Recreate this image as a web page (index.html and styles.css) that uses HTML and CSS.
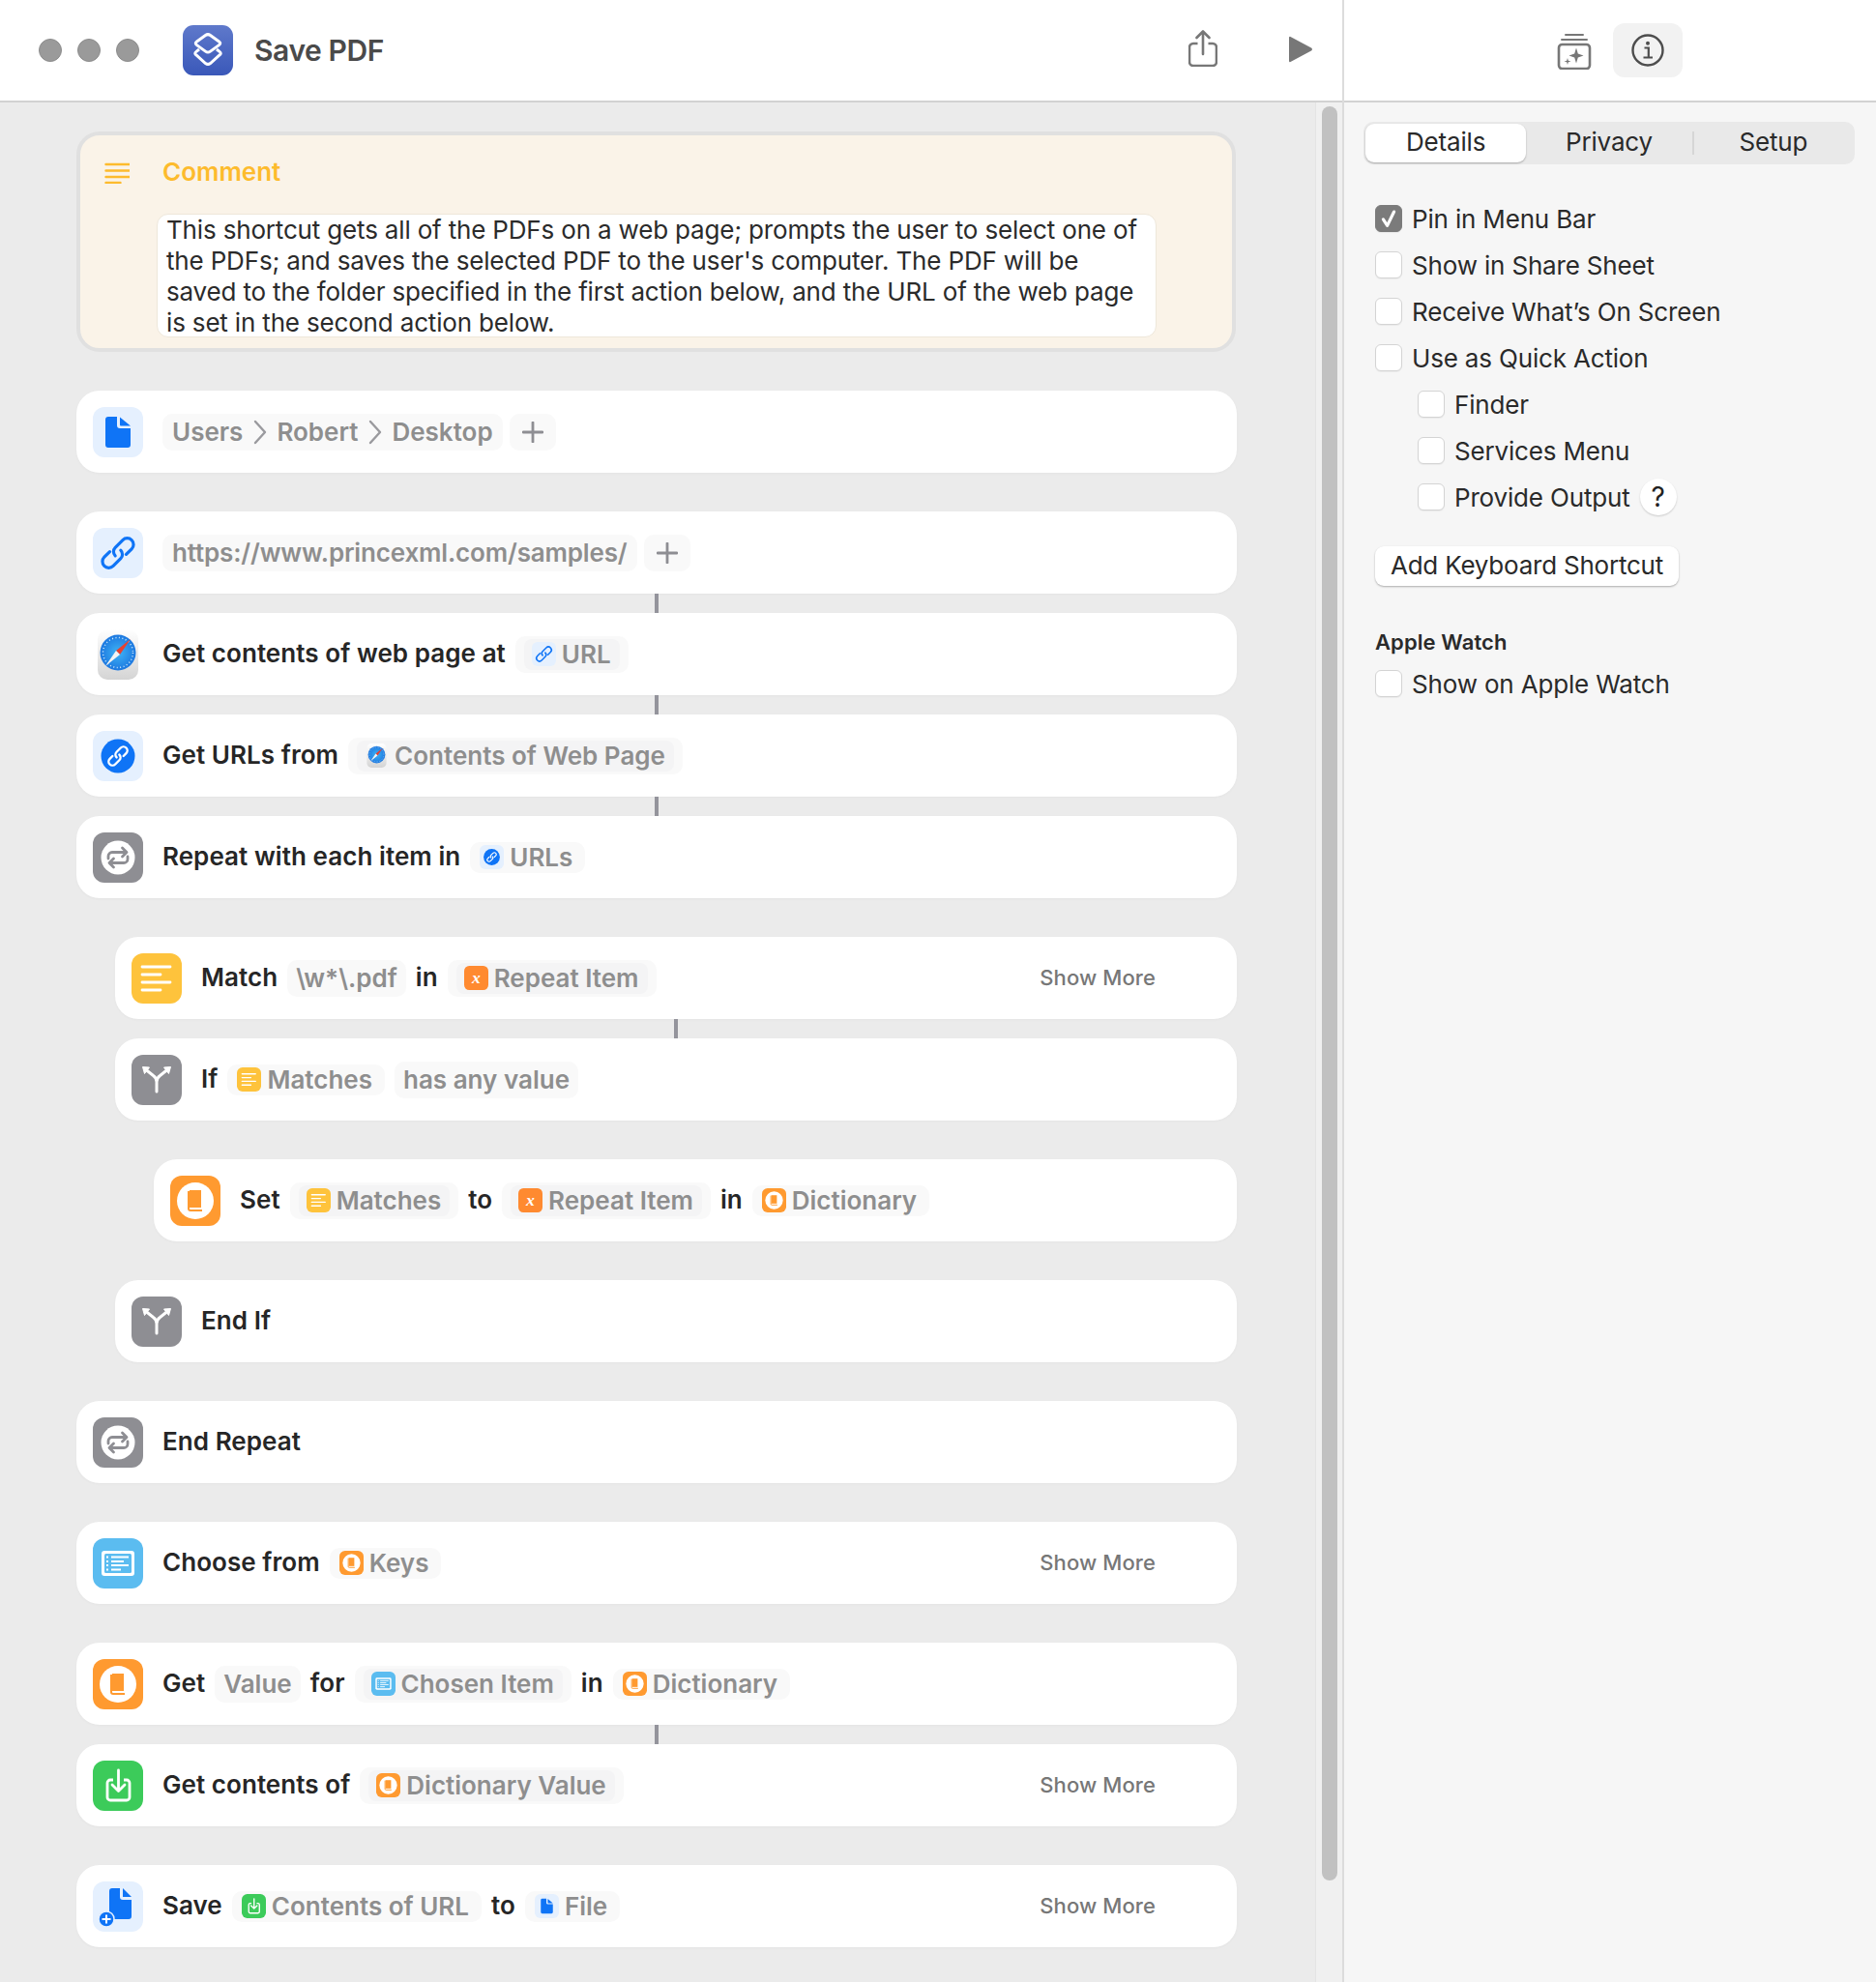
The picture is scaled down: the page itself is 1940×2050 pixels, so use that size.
FILE: index.html
```html
<!DOCTYPE html>
<html lang="en">
<head>
<meta charset="utf-8">
<title>Save PDF</title>
<link rel="stylesheet" href="styles.css">
</head>
<body>
<svg class="sprites" aria-hidden="true">
  <defs>
    <symbol id="doc" viewBox="0 0 52 52"><rect width="52" height="52" rx="12" fill="#e5f0fe"/><path d="M16 10h9v9a3 3 0 0 0 3 3h11v17a3 3 0 0 1-3 3H16a3 3 0 0 1-3-3V13a3 3 0 0 1 3-3z" fill="#0f74f6"/><path d="M28 10.500 39 19.500H29a1 1 0 0 1-1-1z" fill="#0f74f6"/></symbol>
    <symbol id="docplus" viewBox="0 0 52 52"><rect width="52" height="52" rx="12" fill="#e5f0fe"/><path d="M20 7h8v9a3 3 0 0 0 3 3h9v17a3 3 0 0 1-3 3H20a3 3 0 0 1-3-3V10a3 3 0 0 1 3-3z" fill="#0f74f6"/><path d="M31 7l9 9h-9z" fill="#0f74f6"/><circle cx="14" cy="39" r="8" fill="#0f74f6" stroke="#e5f0fe" stroke-width="1.500"/><path d="M14 34.500v9M9.500 39h9" stroke="#fff" stroke-width="2"/></symbol>
    <symbol id="link" viewBox="0 0 52 52"><rect width="52" height="52" rx="12" fill="#e5f0fe"/><g transform="rotate(-45 26 26)" fill="none" stroke="#0f74f6" stroke-width="3.200" stroke-linecap="round"><path d="M30 26a6 6 0 0 1-6 6H13a6.500 6.500 0 0 1 0-13h8"/><path d="M22 26a6 6 0 0 1 6-6h11a6.500 6.500 0 0 1 0 13h-8"/></g></symbol>
    <symbol id="linkc" viewBox="0 0 52 52"><rect width="52" height="52" rx="12" fill="#e5f0fe"/><circle cx="26" cy="26" r="17.500" fill="#0f74f6"/><g transform="rotate(-45 26 26)" fill="none" stroke="#fff" stroke-width="2.400" stroke-linecap="round"><path d="M28 26a4 4 0 0 1-4 4H18a4 4 0 0 1 0-8h4"/><path d="M24 26a4 4 0 0 1 4-4h6a4 4 0 0 1 0 8h-4"/></g></symbol>
    <symbol id="safari" viewBox="0 0 52 52"><defs><linearGradient id="sfbg" x1="0" y1="0" x2="0" y2="1"><stop offset="0" stop-color="#fff"/><stop offset="1" stop-color="#d4d4d4"/></linearGradient><radialGradient id="sfb"><stop offset="0" stop-color="#3fb4f5"/><stop offset="1" stop-color="#1d78e0"/></radialGradient></defs><rect x="5" y="0" width="42" height="52" rx="10" fill="url(#sfbg)"/><circle cx="26" cy="24" r="18.500" fill="url(#sfb)"/><circle cx="26" cy="24" r="15.500" fill="none" stroke="#cfe8fb" stroke-width="1.500" stroke-dasharray="1 2.500"/><path d="M39 10 28 26 24 22z" fill="#e8402f"/><path d="M13 38 24 22 28 26z" fill="#f4f4f4"/></symbol>
    <symbol id="repeat" viewBox="0 0 52 52"><rect width="52" height="52" rx="12" fill="#8e8e93"/><circle cx="26" cy="26" r="17.500" fill="#fff"/><path d="M16 27v-2.500a4 4 0 0 1 4-4h14M30.500 16l4.500 4.500-4.500 4.500M36 25v2.500a4 4 0 0 1-4 4H18M21.500 27 17 31.500l4.500 4.500" fill="none" stroke="#8e8e93" stroke-width="2.800" stroke-linecap="round" stroke-linejoin="round"/></symbol>
    <symbol id="lines" viewBox="0 0 52 52"><rect width="52" height="52" rx="12" fill="#fec33c"/><path d="M11 14h29M11 22h19M11 30h29M11 38h19" stroke="#fff" stroke-width="2.800" stroke-linecap="round"/></symbol>
    <symbol id="fork" viewBox="0 0 52 52"><rect width="52" height="52" rx="12" fill="#8e8e93"/><path d="M26 38V28Q26 24 22.500 21.500L15 15.500M26 28Q26 24 29.500 21.500L37 15.500" fill="none" stroke="#fff" stroke-width="3" stroke-linecap="round"/><path d="M11.500 12.500l7 .500-5 6.500zM40.500 12.500l-7 .500 5 6.500z" fill="#fff" stroke="#fff" stroke-linejoin="round"/></symbol>
    <symbol id="book" viewBox="0 0 52 52"><rect width="52" height="52" rx="12" fill="#ff9a30"/><circle cx="26" cy="26" r="19" fill="#fff"/><path d="M20 15h12v18H20z" fill="#ff9a30"/><path d="M19 16v18a2 2 0 0 0 2 2h12" fill="none" stroke="#ff9a30" stroke-width="2"/></symbol>
    <symbol id="list" viewBox="0 0 52 52"><rect width="52" height="52" rx="12" fill="#5bbcf0"/><rect x="9" y="13" width="34" height="26" rx="3" fill="#fff"/><rect x="12" y="16" width="28" height="20" rx="1.500" fill="#5bbcf0"/><path d="M19 19.500h18M19 24h13M19 28h18M19 32.500h10M14 19.500h2M14 24h2M14 28h2M14 32.500h2" stroke="#fff" stroke-width="1.800"/></symbol>
    <symbol id="down" viewBox="0 0 52 52"><rect width="52" height="52" rx="12" fill="#3ccb5a"/><path d="M21 20h-3a3 3 0 0 0-3 3v15a3 3 0 0 0 3 3h17a3 3 0 0 0 3-3V23a3 3 0 0 0-3-3h-3" fill="none" stroke="#fff" stroke-width="2.800"/><path d="M26.500 10v20M20 25l6.500 6.500L33 25" fill="none" stroke="#fff" stroke-width="2.800" stroke-linecap="round" stroke-linejoin="round"/></symbol>
    <symbol id="chev" viewBox="0 0 14 26"><path d="M2 2l10 11L2 24" fill="none" stroke="#9a9a9e" stroke-width="2.400" stroke-linecap="round" stroke-linejoin="round"/></symbol>
    <symbol id="plus" viewBox="0 0 22 22"><path d="M11 1v20M1 11h20" stroke="#8e8e93" stroke-width="2.800" stroke-linecap="round"/></symbol>
  </defs>
</svg>

<div class="app">
  <section class="main">
    <header class="bar bar-main">
      <div class="lights"><i></i><i></i><i></i></div>
      <svg class="app-icon" viewBox="0 0 52 52"><defs><linearGradient id="appg" x1="0" y1="0" x2="0" y2="1"><stop offset="0" stop-color="#5f79cb"/><stop offset="1" stop-color="#3a58b9"/></linearGradient></defs><rect width="52" height="52" rx="11" fill="url(#appg)"/><path d="M23.500 10.500q2.500-1.800 5 0l9 6.500q2.500 1.800 0 3.600l-9 6.500q-2.500 1.800-5 0l-9-6.500q-2.500-1.800 0-3.600z" fill="none" stroke="#fff" stroke-width="3"/><path d="M17 25l-3 2.400q-2.500 1.800 0 3.600l9.500 8.500q2.500 1.800 5 0l9.500-8.500q2.500-1.800 0-3.600L35 25" fill="none" stroke="#fff" stroke-width="3"/></svg>
      <h1 class="title">Save PDF</h1>
      <svg class="share" viewBox="0 0 30 38"><path d="M9.500 14H5a4 4 0 0 0-4 4v15a4 4 0 0 0 4 4h20a4 4 0 0 0 4-4V18a4 4 0 0 0-4-4h-4.500" fill="none" stroke="#777" stroke-width="2.600"/><path d="M15 25V2M8.500 8 15 1.500 21.500 8" fill="none" stroke="#777" stroke-width="2.600" stroke-linecap="round" stroke-linejoin="round"/></svg>
      <svg class="play" viewBox="0 0 24 28"><path d="M1.500 1 23 12.500a1.700 1.700 0 0 1 0 3L1.500 27a1 1 0 0 1-1.500-1V2a1 1 0 0 1 1.500-1z" fill="#777"/></svg>
    </header>
    <div class="scroller">
      <div class="flow">
        <article class="comment">
          <svg class="comment-icon" viewBox="0 0 25 22"><path d="M1 2h24M1 8.500h24M1 15h24M1 21h15" stroke="#fdbb2d" stroke-width="2.400" stroke-linecap="round"/></svg>
          <div class="comment-body">
            <div class="comment-title">Comment</div>
            <p class="comment-text">This shortcut gets all of the PDFs on a web page; prompts the user to select one of the PDFs; and saves the selected PDF to the user's computer. The PDF will be saved to the folder specified in the first action below, and the URL of the web page is set in the second action below.</p>
          </div>
        </article>

        <div class="card gap"><svg class="tile"><use href="#doc"/></svg>
          <span class="chip path">Users<svg class="chev"><use href="#chev"/></svg>Robert<svg class="chev"><use href="#chev"/></svg>Desktop</span>
          <span class="chip add"><svg class="plus"><use href="#plus"/></svg></span></div>

        <div class="card gap"><svg class="tile"><use href="#link"/></svg>
          <span class="chip url">https://www.princexml.com/samples/</span>
          <span class="chip add"><svg class="plus"><use href="#plus"/></svg></span></div>
        <div class="conn"></div>
        <div class="card"><svg class="tile"><use href="#safari"/></svg><b>Get contents of web page at</b>
          <span class="chip"><span class="var"><svg class="mini"><use href="#link"/></svg>URL</span></span></div>
        <div class="conn"></div>
        <div class="card"><svg class="tile"><use href="#linkc"/></svg><b>Get URLs from</b>
          <span class="chip"><span class="var"><svg class="mini"><use href="#safari"/></svg>Contents of Web Page</span></span></div>
        <div class="conn"></div>
        <div class="card"><svg class="tile"><use href="#repeat"/></svg><b>Repeat with each item in</b>
          <span class="chip solo"><svg class="mini"><use href="#linkc"/></svg>URLs</span></div>

        <div class="card gap in1"><svg class="tile"><use href="#lines"/></svg><b>Match</b>
          <span class="chip">\w*\.pdf</span><b>in</b>
          <span class="chip"><span class="var"><svg class="mini" viewBox="0 0 24 24"><rect width="24" height="24" rx="5" fill="#ff8a30"/><text x="12" y="17" class="x-var">x</text></svg>Repeat Item</span></span>
          <span class="more">Show More</span></div>
        <div class="conn in1"></div>
        <div class="card in1"><svg class="tile"><use href="#fork"/></svg><b>If</b>
          <span class="chip solo"><svg class="mini"><use href="#lines"/></svg>Matches</span>
          <span class="chip">has any value</span></div>

        <div class="card gap in2"><svg class="tile"><use href="#book"/></svg><b>Set</b>
          <span class="chip"><span class="var"><svg class="mini"><use href="#lines"/></svg>Matches</span></span><b>to</b>
          <span class="chip"><span class="var"><svg class="mini" viewBox="0 0 24 24"><rect width="24" height="24" rx="5" fill="#ff8a30"/><text x="12" y="17" class="x-var">x</text></svg>Repeat Item</span></span><b>in</b>
          <span class="chip solo"><svg class="mini"><use href="#book"/></svg>Dictionary</span></div>

        <div class="card gap in1"><svg class="tile"><use href="#fork"/></svg><b>End If</b></div>

        <div class="card gap"><svg class="tile"><use href="#repeat"/></svg><b>End Repeat</b></div>

        <div class="card gap"><svg class="tile"><use href="#list"/></svg><b>Choose from</b>
          <span class="chip solo"><svg class="mini"><use href="#book"/></svg>Keys</span>
          <span class="more">Show More</span></div>

        <div class="card gap"><svg class="tile"><use href="#book"/></svg><b>Get</b>
          <span class="chip">Value</span><b>for</b>
          <span class="chip"><span class="var"><svg class="mini"><use href="#list"/></svg>Chosen Item</span></span><b>in</b>
          <span class="chip solo"><svg class="mini"><use href="#book"/></svg>Dictionary</span></div>
        <div class="conn"></div>
        <div class="card"><svg class="tile"><use href="#down"/></svg><b>Get contents of</b>
          <span class="chip"><span class="var"><svg class="mini"><use href="#book"/></svg>Dictionary Value</span></span>
          <span class="more">Show More</span></div>

        <div class="card gap"><svg class="tile"><use href="#docplus"/></svg><b>Save</b>
          <span class="chip solo"><svg class="mini"><use href="#down"/></svg>Contents of URL</span><b>to</b>
          <span class="chip solo"><svg class="mini"><use href="#doc"/></svg>File</span>
          <span class="more">Show More</span></div>
      </div>
      <div class="track"><div class="thumb"></div></div>
    </div>
  </section>

  <aside class="side">
    <header class="bar bar-side">
      <svg class="lib" viewBox="0 0 36 38"><path d="M9 2h18M5 7h26" stroke="#777" stroke-width="2" stroke-linecap="round"/><rect x="2" y="12" width="32" height="25" rx="3.500" fill="none" stroke="#777" stroke-width="2.600"/><path d="M20 15.500l1.800 6 5.700 2-5.700 2-1.800 6-1.800-6-5.700-2 5.700-2zM11 26l.800 2.700 2.700.800-2.700.800-.800 2.700-.800-2.700-2.700-.800 2.700-.800z" fill="#777"/></svg>
      <span class="info-btn"><svg class="info" viewBox="0 0 34 34"><circle cx="17" cy="17" r="15.500" fill="none" stroke="#4d4d4d" stroke-width="2.400"/><circle cx="17" cy="9.800" r="2" fill="#4d4d4d"/><path d="M13.500 14.500h4.300v10M12.500 24.500h9.500" fill="none" stroke="#4d4d4d" stroke-width="2.200"/></svg></span>
    </header>
    <div class="panel">
      <div class="seg">
        <span class="seg-item on">Details</span>
        <span class="seg-item">Privacy</span>
        <span class="seg-sep"></span>
        <span class="seg-item last">Setup</span>
      </div>
      <ul class="opts">
        <li><span class="cb checked"><svg viewBox="0 0 28 28"><path d="M8 15l4.500 7L20 6.500" fill="none" stroke="#fff" stroke-width="3.400" stroke-linecap="round" stroke-linejoin="round"/></svg></span>Pin in Menu Bar</li>
        <li><span class="cb"></span>Show in Share Sheet</li>
        <li><span class="cb"></span>Receive What’s On Screen</li>
        <li><span class="cb"></span>Use as Quick Action</li>
        <li class="sub"><span class="cb"></span>Finder</li>
        <li class="sub"><span class="cb"></span>Services Menu</li>
        <li class="sub"><span class="cb"></span>Provide Output<span class="help">?</span></li>
      </ul>
      <button class="kbd" type="button">Add Keyboard Shortcut</button>
      <h2 class="watch">Apple Watch</h2>
      <ul class="opts tight"><li><span class="cb"></span>Show on Apple Watch</li></ul>
    </div>
  </aside>
</div>
</body>
</html>
```
FILE: styles.css
```css
* { box-sizing: border-box; }
html, body { margin: 0; padding: 0; }
body {
  width: 1940px;
  height: 2050px;
  overflow: hidden;
  font-family: Inter, "Liberation Sans", sans-serif;
  font-size: 26px;
  color: #262626;
  background: #fff;
}
.sprites { position: absolute; width: 0; height: 0; }
.app { display: flex; height: 2050px; }

/* main column */
.main { width: 1388px; display: flex; flex-direction: column; }
.bar { height: 106px; flex: none; display: flex; align-items: center; background: #fff; border-bottom: 2px solid #d2d2d2; }
.bar-main { padding-left: 40px; }
.lights { display: flex; gap: 16px; }
.lights i { width: 24px; height: 24px; border-radius: 50%; background: #9a9a9a; border: 1px solid #8c8c8c; }
.app-icon { width: 52px; height: 52px; margin-left: 45px; }
.title { margin: 0 0 0 22px; font-size: 30px; font-weight: 600; color: #4a4a4a; letter-spacing: -.4px; }
.share { width: 30px; height: 38px; margin-left: auto; margin-bottom: 4px; }
.play { width: 24px; height: 28px; margin: 0 31px 2px 74px; }

.scroller { flex: 1; display: flex; background: #ebebeb; min-height: 0; }
.flow { width: 1360px; padding: 30px 0 0 79px; display: flex; flex-direction: column; }
.track { width: 28px; padding: 4px 6px 0; background: #f0f0f0; border-left: 1px solid #e4e4e4; }
.thumb { width: 16px; height: 1835px; border-radius: 8px; background: #c1c1c1; }

/* comment */
.comment {
  width: 1199px;
  height: 228px;
  display: flex;
  background: #faf3e8;
  border: 4px solid #e0e0e0;
  border-radius: 24px;
  padding: 25px 0 0 25px;
}
.comment-icon { width: 26px; height: 22px; margin-top: 3px; flex: none; }
.comment-body { margin-left: 28px; }
.comment-title { font-size: 26px; font-weight: 600; color: #fdbb2d; line-height: 26px; margin-left: 6px; }
.comment-text {
  width: 1034px;
  height: 128px;
  margin: 30px 0 0;
  padding: 0 9px;
  background: #fff;
  border: 1px solid #eee7da;
  border-radius: 12px;
  font-size: 26px;
  line-height: 32px;
  letter-spacing: -.17px;
  color: #2b2b2b;
}

/* cards */
.card {
  width: 1200px;
  height: 85px;
  flex: none;
  display: flex;
  align-items: center;
  gap: 10px;
  padding: 0 84px 0 17px;
  background: #fff;
  border-radius: 24px;
  box-shadow: 0 1px 3px rgba(0, 0, 0, .03);
}
.card.gap { margin-top: 40px; }
.card.in1 { width: 1160px; margin-left: 40px; }
.card.in2 { width: 1120px; margin-left: 80px; }
.card b { font-weight: 600; white-space: nowrap; color: #262626; letter-spacing: .06px; margin-bottom: 2px; }
.tile { width: 52px; height: 52px; flex: none; margin-right: 10px; }
.conn { width: 4px; height: 20px; flex: none; background: #94949c; margin-left: 598px; }
.conn.in1 { margin-left: 618px; }

.chip {
  height: 38px;
  display: inline-flex;
  align-items: center;
  padding: 0 9px;
  background: #f9f9f9;
  border-radius: 10px;
  color: #8e8e8e;
  font-weight: 600;
  white-space: nowrap;
}
.chip.path { padding: 0 10px; }
.chip.url { padding: 0 10px; letter-spacing: -.16px; }
.chip.solo { height: 32px; gap: 6px; padding: 0 13px 0 10px; }
.chip.add { padding: 0 13px; margin-left: -3px; }
.var { height: 32px; display: inline-flex; align-items: center; gap: 6px; padding: 0 9px 0 8px; background: #f4f4f5; border-radius: 8px; }
.mini { width: 25px; height: 25px; flex: none; }
.x-var { font: italic 600 17px "Liberation Serif", serif; fill: #fff; text-anchor: middle; }
.chev { width: 14px; height: 26px; margin: 0 10px 0 11px; }
.plus { width: 22px; height: 22px; }
.more { margin-left: auto; margin-bottom: 2px; font-size: 22px; font-weight: 500; letter-spacing: .1px; color: #777; white-space: nowrap; }

/* side panel */
.side { width: 552px; display: flex; flex-direction: column; border-left: 2px solid #dcdcdc; background: #f6f6f6; letter-spacing: -.17px; }
.bar-side { padding-left: 220px; }
.lib { width: 36px; height: 38px; margin-top: 2px; }
.info-btn { width: 72px; height: 56px; margin-left: 22px; display: flex; align-items: center; justify-content: center; background: #f2f2f2; border-radius: 12px; }
.info { width: 34px; height: 34px; }

.panel { padding: 20px 20px 0 20px; }
.seg { position: relative; width: 508px; height: 44px; display: flex; align-items: center; background: #e9e9e9; border-radius: 10px; padding: 0 2px; }
.seg-item { text-align: center; height: 40px; line-height: 38px; padding-bottom: 2px; width: 167px; color: #2a2a2a; }
.seg-item.on { background: #fff; border-radius: 9px; box-shadow: 0 1px 2px rgba(0, 0, 0, .28); }
.seg-item:nth-child(2) { width: 172px; }
.seg-sep { width: 2px; height: 24px; background: #d6d6d6; }
.seg-item.last { width: 165px; }

.opts { list-style: none; margin: 32px 0 0; padding: 0 0 0 12px; }
.opts li { height: 48px; display: flex; align-items: center; gap: 10px; color: #2a2a2a; }
.opts li.sub { padding-left: 44px; }
.opts.tight { margin-top: 0; }
.cb { width: 28px; height: 28px; flex: none; background: #fff; border: 1px solid #d4d4d4; border-radius: 6px; box-shadow: 0 1px 1px rgba(0, 0, 0, .05); }
.cb.checked { background: #7b7b7b; border-color: #7b7b7b; }
.cb svg { display: block; width: 26px; height: 26px; }
.help { width: 38px; height: 38px; margin-left: 0; display: flex; align-items: center; justify-content: center; font-size: 28px; color: #222; background: #fff; border-radius: 50%; box-shadow: 0 1px 2px rgba(0, 0, 0, .18); }

.kbd { display: block; width: 314px; height: 41px; margin: 27px 0 0 12px; padding: 0 0 2px; background: #fff; border: 0; border-radius: 9px; box-shadow: 0 1px 2px rgba(0, 0, 0, .3); font: inherit; letter-spacing: -.22px; color: #2a2a2a; }
.watch { margin: 44px 0 5px 12px; font-size: 22px; line-height: 28px; font-weight: 600; letter-spacing: .1px; color: #2a2a2a; }
```
